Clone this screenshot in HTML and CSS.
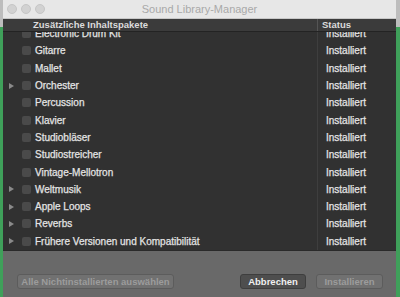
FILE: index.html
```html
<!DOCTYPE html>
<html>
<head>
<meta charset="utf-8">
<title>Sound Library-Manager</title>
<link rel="stylesheet" href="styles.css">
</head>
<body>
  <div class="window">
    <div class="titlebar">
      <div class="lights">
        <span class="light"></span>
        <span class="light"></span>
        <span class="light"></span>
      </div>
      <div class="title">Sound Library-Manager</div>
    </div>

    <div class="table">
      <div class="thead">
        <div class="col-name">Zusätzliche Inhaltspakete</div>
        <div class="col-status">Status</div>
      </div>
      <div class="scroll">
        <div class="rows">
          <div class="row"><span class="disc"></span><span class="check"></span><span class="name">Electronic Drum Kit</span><span class="status">Installiert</span></div>
          <div class="row"><span class="disc"></span><span class="check"></span><span class="name">Gitarre</span><span class="status">Installiert</span></div>
          <div class="row"><span class="disc"></span><span class="check"></span><span class="name">Mallet</span><span class="status">Installiert</span></div>
          <div class="row"><span class="disc tri"></span><span class="check"></span><span class="name">Orchester</span><span class="status">Installiert</span></div>
          <div class="row"><span class="disc"></span><span class="check"></span><span class="name">Percussion</span><span class="status">Installiert</span></div>
          <div class="row"><span class="disc"></span><span class="check"></span><span class="name">Klavier</span><span class="status">Installiert</span></div>
          <div class="row"><span class="disc"></span><span class="check"></span><span class="name">Studiobläser</span><span class="status">Installiert</span></div>
          <div class="row"><span class="disc"></span><span class="check"></span><span class="name">Studiostreicher</span><span class="status">Installiert</span></div>
          <div class="row"><span class="disc"></span><span class="check"></span><span class="name">Vintage-Mellotron</span><span class="status">Installiert</span></div>
          <div class="row"><span class="disc tri"></span><span class="check"></span><span class="name">Weltmusik</span><span class="status">Installiert</span></div>
          <div class="row"><span class="disc tri"></span><span class="check"></span><span class="name">Apple Loops</span><span class="status">Installiert</span></div>
          <div class="row"><span class="disc tri"></span><span class="check"></span><span class="name">Reverbs</span><span class="status">Installiert</span></div>
          <div class="row"><span class="disc tri"></span><span class="check"></span><span class="name">Frühere Versionen und Kompatibilität</span><span class="status">Installiert</span></div>
        </div>
      </div>
    </div>

    <div class="footer">
      <button class="btn disabled btn-all">Alle Nichtinstallierten auswählen</button>
      <div class="spacer"></div>
      <button class="btn btn-cancel">Abbrechen</button>
      <button class="btn disabled btn-install">Installieren</button>
    </div>
  </div>
</body>
</html>
```

FILE: styles.css
```css
html, body {
  margin: 0;
  height: 100%;
}

body {
  font-family: "Liberation Sans", Arial, sans-serif;
  background: linear-gradient(to bottom, #bdbdbd 0, #bdbdbd 27px, #3fa05a 27px);
  padding-left: 3px;
  padding-right: 4px;
  box-sizing: border-box;
  overflow: hidden;
}

.window {
  height: 297px;
  display: flex;
  flex-direction: column;
  background: #313131;
}

.titlebar {
  height: 19px;
  flex: none;
  background: #e7e7e7;
  border-bottom: 1px solid #c8c8c8;
  box-sizing: border-box;
  display: flex;
  align-items: center;
  position: relative;
}

.lights {
  display: flex;
  gap: 4px;
  padding-left: 4px;
}

.light {
  width: 10px;
  height: 10px;
  border-radius: 50%;
  background: #d2d2d2;
  border: 1px solid #c6c6c6;
  box-sizing: border-box;
}

.title {
  position: absolute;
  left: 0;
  right: 0;
  text-align: center;
  font-size: 11px;
  color: #a9a9a9;
}

.table {
  height: 231px;
  flex: none;
  display: flex;
  flex-direction: column;
  position: relative;
}

.thead {
  height: 12px;
  flex: none;
  display: flex;
  background: #3b3b3b;
  border-bottom: 1px solid #232323;
  font-size: 9.5px;
  font-weight: bold;
  color: #dcdcdc;
  line-height: 12px;
  position: relative;
  z-index: 1;
}

.col-name {
  width: 314px;
  padding-left: 30px;
  box-sizing: border-box;
}

.col-status {
  flex: 1;
  border-left: 1px solid #555;
  padding-left: 4px;
}

.scroll {
  flex: 1;
  overflow: hidden;
  background: linear-gradient(to right, transparent 314px, #3e3e3e 314px, #3e3e3e 315px, transparent 315px);
}

.rows {
  margin-top: -7px;
}

.row {
  height: 17.3px;
  display: flex;
  align-items: center;
  font-size: 10px;
  color: #e4e4e4;
  -webkit-text-stroke: 0.25px currentColor;
}

.disc {
  width: 19px;
  height: 8px;
  flex: none;
  position: relative;
}

.disc.tri::after {
  content: "";
  position: absolute;
  left: 6px;
  top: 1px;
  border-left: 5px solid #8a8a8a;
  border-top: 3px solid transparent;
  border-bottom: 3px solid transparent;
}

.check {
  width: 9px;
  height: 9px;
  border-radius: 2px;
  background: #4a4a4a;
  flex: none;
  margin-right: 4px;
}

.name {
  flex: 1;
  white-space: nowrap;
}

.status {
  width: 70px;
  flex: none;
}

.footer {
  flex: 1;
  background: #696969;
  border-top: 1px solid #2a2a2a;
  display: flex;
  align-items: flex-end;
  padding: 0 13px 8px 14px;
  gap: 10px;
}

.spacer {
  flex: 1;
}

.btn {
  height: 15px;
  font-family: "Liberation Sans", Arial, sans-serif;
  font-size: 9.5px;
  font-weight: bold;
  border-radius: 3px;
  border: 1px solid #5c5c5c;
  padding: 0;
  line-height: 13px;
}

.btn.disabled {
  background: #717171;
  color: #9c9c9c;
}

.btn-all {
  width: 157px;
}

.btn-cancel {
  width: 66px;
  background: #4e4e4e;
  border-color: #3e3e3e;
  color: #f0f0f0;
}

.btn-install {
  width: 67px;
}
```
